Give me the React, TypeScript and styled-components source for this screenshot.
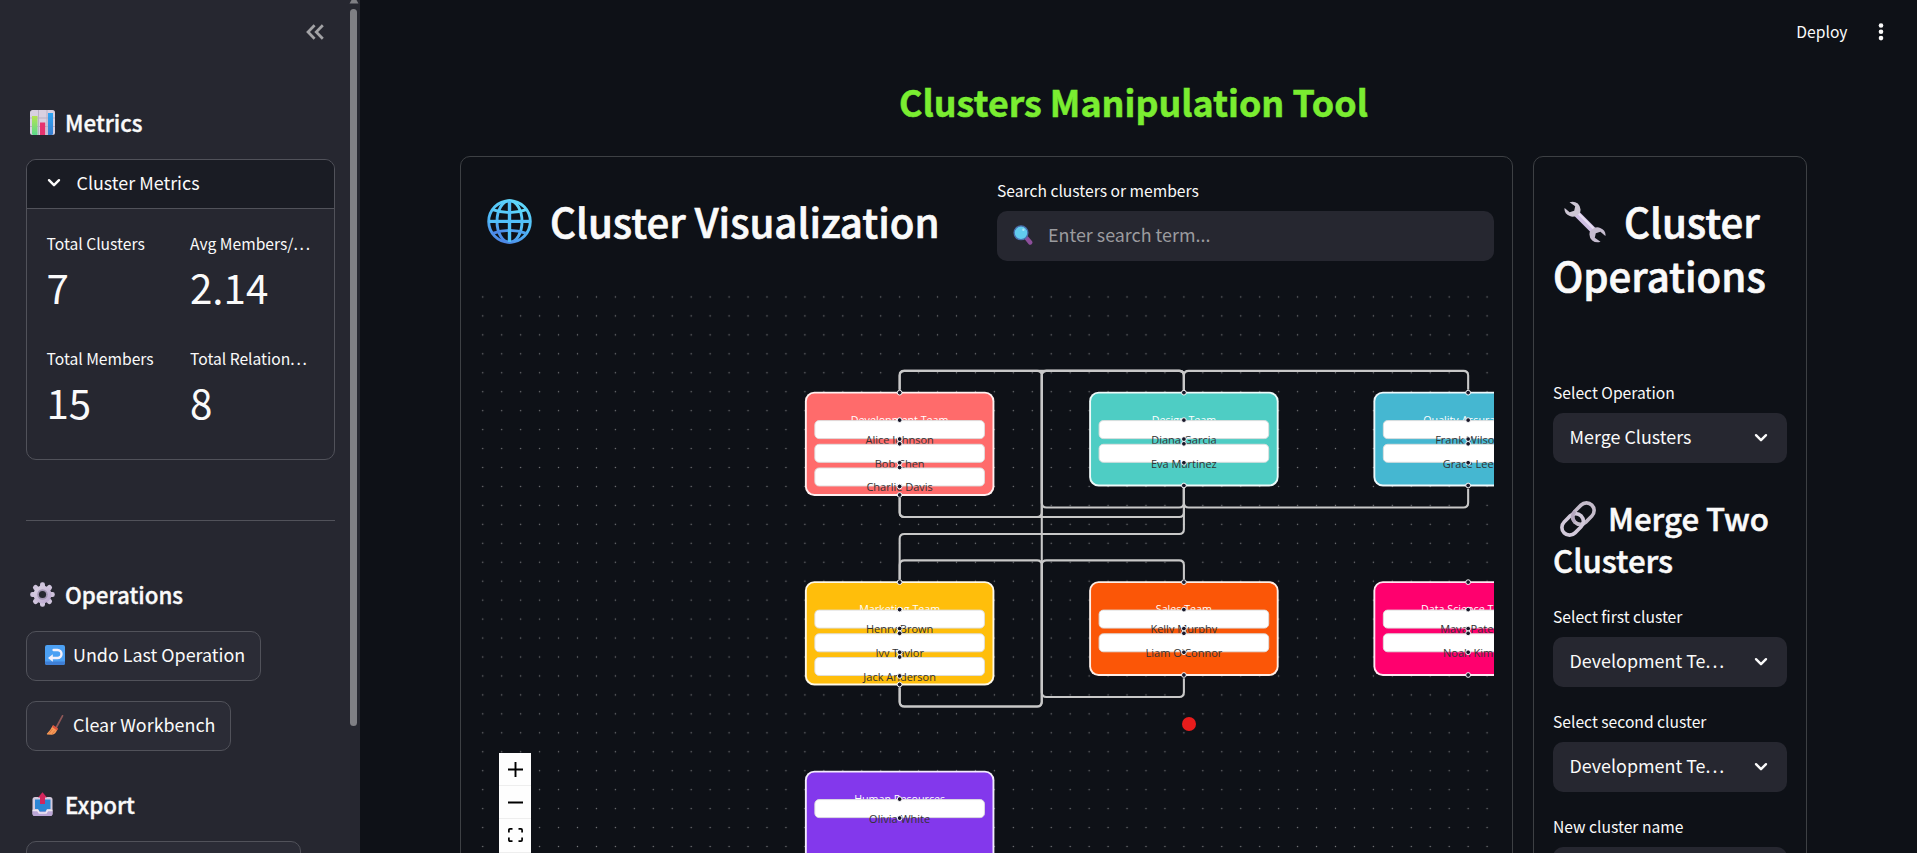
import React from "react";
import styled, { createGlobalStyle } from "styled-components";

const GlobalStyle = createGlobalStyle`
  *, *::before, *::after { box-sizing: border-box; }
  html, body { margin: 0; height: 100%; overflow: hidden; background: #0e1117; }
  body { font-family: "Noto Sans CJK SC", "Noto Sans", sans-serif; color: #fafafa; }
  h1, h2, h3, p { margin: 0; }
  h2, h3 { font-weight: 500; -webkit-text-stroke: 0.017em currentColor; }
  svg { display: block; flex: none; }
`;

const Page = styled.div`
  display: flex;
  width: 100vw;
  height: 100vh;
  overflow: hidden;
`;

/* ---------- sidebar ---------- */

const Sidebar = styled.aside`
  display: flex;
  flex: 0 0 360px;
  height: 100%;
  background: #262730;
  overflow: hidden;
`;

const SidebarBody = styled.div`
  width: 336px;
  flex: none;
  padding: 0 0 0 26px;
`;

const SidebarHeader = styled.div`
  display: flex;
  justify-content: flex-end;
  height: 107px;
  padding: 24px 12px 0 0;
`;

const ScrollTrack = styled.div`
  width: 10px;
  margin-left: 13px;
  display: flex;
  flex-direction: column;
  align-items: center;
  gap: 5px;
`;

const ScrollThumb = styled.div`
  width: 7px;
  height: 717px;
  margin-right: 1px;
  border-radius: 4px;
  background: #7f7f84;
`;

const SideHeading = styled.h2<{ $top?: number }>`
  display: flex;
  align-items: center;
  gap: 10px;
  height: 30px;
  margin-top: ${(p) => p.$top ?? 0}px;
  padding-left: 4px;
  font-size: 22.3px;
  line-height: 30px;
  white-space: nowrap;

  svg { margin-top: 1px; }
`;

const Expander = styled.section`
  width: 309px;
  height: 301px;
  margin-top: 22px;
  border: 1px solid #51525a;
  border-radius: 10px;
  overflow: hidden;
`;

const ExpanderHeader = styled.div`
  display: flex;
  align-items: center;
  gap: 15.5px;
  height: 49px;
  padding: 0 20px 4px 20px;
  border-bottom: 1px solid #51525a;
  background: #1a1c24;
  font-size: 17.9px;
  line-height: 30px;

  svg { margin-top: 2px; }
`;

const MetricGrid = styled.div`
  display: grid;
  grid-template-columns: 123.5px 123px;
  column-gap: 20px;
  row-gap: 32px;
  padding: 23px 19.5px 0;
`;

const MetricLabel = styled.div`
  height: 24px;
  line-height: 24px;
  font-size: 15.65px;
  white-space: nowrap;
`;

const MetricValue = styled.div`
  margin-top: 3px;
  height: 56px;
  line-height: 56px;
  font-size: 40.3px;
`;

const Dots = styled.span`
  letter-spacing: 0.11em;
`;

const Divider = styled.hr`
  width: 309px;
  height: 1px;
  margin: 60px 0 58px;
  border: 0;
  background: #51525a;
`;

const SideButton = styled.button<{ $w: number; $top: number }>`
  display: flex;
  align-items: center;
  gap: 8px;
  width: ${(p) => p.$w}px;
  height: 50px;
  margin-top: ${(p) => p.$top}px;
  padding: 0 0 4px 18px;
  border: 1px solid #51525a;
  border-radius: 10px;
  background: #2b2c36;
  color: #fafafa;
  font-family: inherit;
  font-size: 17.9px;
  white-space: nowrap;

  svg { margin-top: 2px; }
`;

/* ---------- main area ---------- */

const Main = styled.main`
  flex: 1;
  display: flex;
  flex-direction: column;
  min-width: 0;
  padding: 0 0 0 100px;
`;

const TopBar = styled.header`
  display: flex;
  justify-content: flex-end;
  align-items: center;
  gap: 30px;
  height: 77px;
  padding: 0 33.5px 14px 0;
  font-size: 15.65px;
`;

const PageTitle = styled.h1`
  width: 1347px;
  height: 48px;
  line-height: 48px;
  margin-bottom: 31px;
  text-align: center;
  font-size: 35.8px;
  font-weight: 700;
  -webkit-text-stroke: 0.5px currentColor;
  color: #7aed31;
`;

const Columns = styled.div`
  display: flex;
  gap: 20px;
  flex: 1;
  min-height: 0;
`;

const Panel = styled.section<{ $w: number }>`
  width: ${(p) => p.$w}px;
  flex: none;
  height: 800px;
  padding: 0 18px 0 ${(p) => (p.$w > 500 ? 18 : 19)}px;
  border: 1px solid #3d4044;
  border-radius: 10px;
`;

const VizHeader = styled.div`
  display: flex;
  justify-content: space-between;
  height: 125px;
`;

const VizTitle = styled.h2`
  display: flex;
  align-items: center;
  gap: 18px;
  height: 54px;
  margin-top: 37px;
  padding-left: 8px;
  font-size: 40.2px;
  line-height: 54px;
  white-space: nowrap;

  svg { margin-top: 1px; }
`;

const SearchField = styled.div`
  width: 497px;
  margin-top: 22px;
`;

const FieldLabel = styled.label<{ $top?: number }>`
  display: block;
  height: 24px;
  line-height: 24px;
  margin-top: ${(p) => p.$top ?? 0}px;
  font-size: 15.65px;
  white-space: nowrap;
`;

const SearchBox = styled.div`
  display: flex;
  align-items: center;
  gap: 15px;
  height: 50px;
  margin-top: 8px;
  padding: 0 16px 4px;
  border-radius: 10px;
  background: #262730;
  color: #9b9b9f;
  font-size: 17.9px;

  svg { margin-top: 2px; }
`;

const OpsTitle = styled.h2`
  margin-top: 37px;
  height: 108px;
  font-size: 40.2px;
  line-height: 54px;
`;

const OpsSubtitle = styled.h3`
  margin-top: 34px;
  height: 84px;
  font-size: 31.2px;
  line-height: 42px;
`;

const TitleLine = styled.span<{ $gap: number; $pad: number }>`
  display: flex;
  align-items: center;
  gap: ${(p) => p.$gap}px;
  padding-left: ${(p) => p.$pad}px;
  white-space: nowrap;

  svg { margin-top: 1px; }
`;

const Select = styled.div`
  display: flex;
  align-items: center;
  justify-content: space-between;
  width: 234px;
  height: 50px;
  margin-top: 8px;
  padding: 0 19px 4px 16.5px;
  border-radius: 10px;
  background: #262730;
  font-size: 17.9px;

  svg { margin-top: 4px; }
`;

const SelectText = styled.span`
  white-space: nowrap;
`;

/* ---------- flow canvas ---------- */

const ZOOM = 0.9475;
const ORIGIN = { x: 325.9, y: 109.7 };

const Canvas = styled.div`
  position: relative;
  width: 1015px;
  height: 640px;
  overflow: hidden;
  font-family: "Open Sans", "Noto Sans", sans-serif;
`;

const DotGrid = styled.svg`
  position: absolute;
  inset: 0;
`;

const Viewport = styled.div`
  position: absolute;
  left: 0;
  top: 0;
  transform-origin: 0 0;
  transform: translate(${ORIGIN.x}px, ${ORIGIN.y}px) scale(${ZOOM});
`;

const EdgeLayer = styled.svg`
  position: absolute;
  left: 0;
  top: 0;
  overflow: visible;
`;

const ClusterNode = styled.div<{ $x: number; $y: number; $h: number; $c: string }>`
  position: absolute;
  left: ${(p) => p.$x}px;
  top: ${(p) => p.$y}px;
  width: 200px;
  height: ${(p) => p.$h}px;
  border: 2px solid rgba(255, 255, 255, 0.9);
  border-radius: 10px;
  background: ${(p) => p.$c};
`;

const ClusterLabel = styled.div`
  position: absolute;
  left: 0;
  right: 0;
  top: 19px;
  height: 18px;
  line-height: 18px;
  font-size: 11.3px;
  text-align: center;
  color: #fff;
  white-space: nowrap;
`;

const MemberNode = styled.div<{ $x: number; $y: number }>`
  position: absolute;
  left: ${(p) => p.$x}px;
  top: ${(p) => p.$y}px;
  width: 180px;
  height: 20px;
  border: 1px solid #ddd;
  border-radius: 5px;
  background: #fff;
`;

const MemberLabel = styled.div`
  position: absolute;
  left: 0;
  right: 0;
  top: 11px;
  height: 18px;
  line-height: 18px;
  font-size: 11.6px;
  text-align: center;
  color: #333;
  white-space: nowrap;
`;

const Handle = styled.i<{ $at: "top" | "bottom" }>`
  position: absolute;
  left: calc(50% - 3px);
  ${(p) => p.$at}: -4px;
  width: 6px;
  height: 6px;
  border: 1px solid #fff;
  border-radius: 50%;
  background: #1a192b;
`;

const Controls = styled.div`
  position: absolute;
  left: 20px;
  top: 471px;
  width: 32px;
`;

const ControlButton = styled.div`
  display: flex;
  align-items: center;
  justify-content: center;
  height: 33.2px;
  border-bottom: 1px solid #eee;
  background: #fefefe;
`;

const Marker = styled.div`
  position: absolute;
  left: 703px;
  top: 435px;
  width: 14px;
  height: 14px;
  border-radius: 50%;
  background: #e81c1c;
`;

type Cluster = {
  name: string;
  color: string;
  x: number;
  y: number;
  h: number;
  members: string[];
  root?: boolean;
};

const clusters: Cluster[] = [
  { name: "Development Team", color: "#ff6b6b", x: 0, y: 0, h: 110, members: ["Alice Johnson", "Bob Chen", "Charlie Davis"] },
  { name: "Design Team", color: "#4ecdc4", x: 300, y: 0, h: 100, members: ["Diana Garcia", "Eva Martinez"] },
  { name: "Quality Assurance", color: "#45b7d1", x: 600, y: 0, h: 100, members: ["Frank Wilson", "Grace Lee"] },
  { name: "Marketing Team", color: "#ffbe0b", x: 0, y: 200, h: 110, members: ["Henry Brown", "Ivy Taylor", "Jack Anderson"] },
  { name: "Sales Team", color: "#fb5607", x: 300, y: 200, h: 100, members: ["Kelly Murphy", "Liam O'Connor"] },
  { name: "Data Science Team", color: "#ff006e", x: 600, y: 200, h: 100, members: ["Maya Patel", "Noah Kim"] },
  { name: "Human Resources", color: "#8338ec", x: 0, y: 400, h: 100, members: ["Olivia White"], root: true },
];

/* Orthogonal polyline with 5px rounded corners. */
function roundedPath(points: [number, number][], r = 5): string {
  let d = `M${points[0][0]} ${points[0][1]}`;
  for (let i = 1; i < points.length - 1; i++) {
    const [px, py] = points[i - 1];
    const [x, y] = points[i];
    const [nx, ny] = points[i + 1];
    const ax = x - Math.sign(x - px) * r;
    const ay = y - Math.sign(y - py) * r;
    const bx = x + Math.sign(nx - x) * r;
    const by = y + Math.sign(ny - y) * r;
    d += ` L${ax} ${ay} Q${x} ${y} ${bx} ${by}`;
  }
  const last = points[points.length - 1];
  return d + ` L${last[0]} ${last[1]}`;
}

function edge(from: Cluster, to: Cluster): string {
  const sx = from.x + 100;
  const sy = from.y + from.h + 2.3;
  const tx = to.x + 100;
  const ty = to.y - 2;
  if (ty > sy) {
    const my = (sy + ty) / 2;
    return roundedPath([[sx, sy], [sx, my], [tx, my], [tx, ty]]);
  }
  const mx = (sx + tx) / 2;
  return roundedPath([[sx, sy], [sx, sy + 20], [mx, sy + 20], [mx, ty - 20], [tx, ty - 20], [tx, ty]]);
}

const [dev, design, qa, marketing, sales] = clusters;
const links: [Cluster, Cluster][] = [
  [dev, design], [design, dev], [dev, qa], [qa, dev],
  [design, marketing], [marketing, design], [marketing, sales], [sales, marketing],
];

/* ---------- icons ---------- */

const Chevron = () => (
  <svg width="14" height="10" viewBox="0 0 14 10" fill="none" stroke="#fafafa" strokeWidth="2.4" strokeLinecap="round" strokeLinejoin="round">
    <path d="M2 2.2 7 7.2 12 2.2" />
  </svg>
);

const CollapseIcon = () => (
  <svg width="18" height="16" viewBox="0 0 18 16" fill="none" stroke="#a3a3a6" strokeWidth="2.7">
    <path d="M8.6 1.2 2 8l6.600 6.800M16.800 1.200 10.200 8l6.600 6.800" />
  </svg>
);

const ChartIcon = () => (
  <svg width="25" height="25" viewBox="0 0 25 25">
    <defs>
      <linearGradient id="gr" x1="0" y1="0" x2="0" y2="1"><stop offset="0" stopColor="#b5e352" /><stop offset="1" stopColor="#5bd98b" /></linearGradient>
      <linearGradient id="bl" x1="0" y1="0" x2="0" y2="1"><stop offset="0" stopColor="#2ea6f5" /><stop offset="1" stopColor="#3b7fd0" /></linearGradient>
    </defs>
    <rect width="25" height="25" rx="2.500" fill="#d8d0e0" />
    <path d="M8.500 0v25M17 0v25M0 8h25M0 16.500h25" stroke="#b9b0c4" strokeWidth="1" />
    <path d="M2 6h5.500v19H3.500Q2 25 2 23.500Z" fill="url(#gr)" />
    <rect x="10" y="12.500" width="5.200" height="12.500" fill="#e5346f" />
    <path d="M18 3h5v20.500q0 1.500-1.500 1.500H18Z" fill="url(#bl)" />
  </svg>
);

const GearIcon = () => (
  <svg width="25" height="25" viewBox="0 0 25 25">
    <defs><linearGradient id="ge" x1="0" y1="0" x2="1" y2="1"><stop offset="0" stopColor="#ddd6e4" /><stop offset="1" stopColor="#b9a3cf" /></linearGradient></defs>
    <g fill="url(#ge)">
      {[0, 45, 90, 135, 180, 225, 270, 315].map((a) => (
        <rect key={a} x="10" y="0.200" width="5" height="7" rx="2.200" transform={`rotate(${a} 12.500 12.500)`} fill="#cfc4dc" />
      ))}
      <circle cx="12.500" cy="12.500" r="9" />
    </g>
    <circle cx="12.500" cy="12.500" r="5.300" fill="#a396b3" />
    <circle cx="12.500" cy="12.500" r="3.600" fill="#262730" />
  </svg>
);

const UndoIcon = () => (
  <svg width="20" height="20" viewBox="0 0 20 20">
    <rect width="20" height="20" rx="2" fill="#4ca0f3" />
    <path d="M0 16.500h20V18q0 2-2 2H2q-2 0-2-2Z" fill="#3f7fd6" />
    <path d="M8.600 5h3.900a3.700 3.700 0 0 1 0 8H7" fill="none" stroke="#f5f1fb" strokeWidth="2.400" strokeLinecap="round" />
    <path d="M3 13l4.800-3.800v7.600Z" fill="#f5f1fb" />
  </svg>
);

const BroomIcon = () => (
  <svg width="20" height="20" viewBox="0 0 20 20">
    <path d="M17.500.8 11 13" stroke="#8f5757" strokeWidth="1.700" strokeLinecap="round" />
    <path d="M7.800 10.500 12.600 14q-2 5.500-5.600 5.800L2 19.600q-.6-.9.500-1.600 2.700-2.500 5.300-7.500Z" fill="#f79a56" />
    <path d="M8.200 10 13 13.400l-1 2-4.900-3.500Z" fill="#e0533d" />
    <path d="M4 18.500 7.500 14M7 19 10 15.500" stroke="#d9703c" strokeWidth=".8" />
  </svg>
);

const OutboxIcon = () => (
  <svg width="25" height="25" viewBox="0 0 25 25">
    <rect x="2.500" y="5" width="20" height="19" rx="2.500" fill="#d3cadd" />
    <path d="M2.500 19h20v2.500q0 2.500-2.500 2.500H5q-2.500 0-2.500-2.500Z" fill="#bba6d6" />
    <path d="M5 7.500h15.500V17H17l-1.500 2.500h-6L8 17H5Z" fill="#2c85d3" />
    <path d="M2.500 18.500h5.200L9.300 21h6.700l1.600-2.500h4.900" stroke="#ede7f3" strokeWidth="1.600" fill="none" />
    <path d="M12.500.2 17 5.400H15V12h-5V5.400H8Z" fill="#d3265c" />
  </svg>
);

const GlobeIcon = () => (
  <svg width="45" height="45" viewBox="0 0 45 45" fill="none" strokeWidth="2.900">
    <defs><linearGradient id="gl" x1="0.700" y1="0" x2="0.300" y2="1"><stop offset="0" stopColor="#5fd8fb" /><stop offset="0.600" stopColor="#4fb8f8" /><stop offset="1" stopColor="#4c86e6" /></linearGradient></defs>
    <g stroke="url(#gl)">
      <circle cx="22.500" cy="22.500" r="20.800" />
      <ellipse cx="22.500" cy="22.500" rx="12.500" ry="20.800" />
      <path d="M5.500 10.600q17 6 34 0M5.500 34.400q17-6 34 0" />
    </g>
    <g fill="#52c0f9" stroke="none"><rect x="20.800" y="2" width="3.400" height="41" /><rect x="2" y="20.800" width="41" height="3.200" /></g>
  </svg>
);

const SearchIcon = () => (
  <svg width="20" height="20" viewBox="0 0 20 20">
    <path d="M13.800 13.300 17.200 17.500" stroke="#8d4f9b" strokeWidth="4.400" strokeLinecap="round" />
    <circle cx="8" cy="7.800" r="6.900" fill="#62cbee" stroke="#4a6fae" strokeWidth="1.300" />
    <circle cx="10.400" cy="4.800" r="1.200" fill="#a8e6f8" />
  </svg>
);

const WrenchIcon = () => (
  <svg width="42" height="42" viewBox="0 0 42 42">
    <path d="M11 11 31 31" stroke="#cfbfe4" strokeWidth="6.500" />
    <path d="M12.500 10.500 32 30" stroke="#e8dff2" strokeWidth="2" />
    <path d="M5.500 1.200Q10-.4 13.800 2.500q4 4 2.200 9.200-5.500 5.800-10.200 3.400Q-.3 12.500.6 7l5 4.200 4.600-1.400 1-4.600Z" fill="#cdc6d4" />
    <path d="M36.500 40.800q-4.500 1.600-8.300-1.300-4-4-2.200-9.200 5.500-5.800 10.200-3.400 6.100 2.600 5.200 8.100l-5-4.200-4.600 1.400-1 4.600Z" fill="#c5bccf" />
  </svg>
);

const LinkIcon = () => (
  <svg width="36" height="36" viewBox="0 0 36 36" fill="none" strokeWidth="3.600">
    <g transform="rotate(-45 18 18)">
      <rect x="13.600" y="10.300" width="24" height="15.400" rx="7.700" stroke="#c5bccb" />
      <rect x="-1.600" y="10.300" width="24" height="15.400" rx="7.700" stroke="#d2c9da" />
      <path d="M13.600 18a7.700 7.700 0 0 1 7.700-7.700" stroke="#b5a8bf" />
    </g>
  </svg>
);

const DotsMenu = () => (
  <svg width="6" height="18" viewBox="0 0 6 18" fill="#fafafa">
    <circle cx="3" cy="2.500" r="2.300" /><circle cx="3" cy="8.800" r="2.300" /><circle cx="3" cy="15.100" r="2.300" />
  </svg>
);

type Metric = { label: string; clipped?: boolean; value: string };

const metrics: Metric[] = [
  { label: "Total Clusters", value: "7" },
  { label: "Avg Members/", clipped: true, value: "2.14" },
  { label: "Total Members", value: "15" },
  { label: "Total Relation", clipped: true, value: "8" },
];

export default function App() {
  return (
    <Page>
      <GlobalStyle />
      <Sidebar>
        <SidebarBody>
          <SidebarHeader><CollapseIcon /></SidebarHeader>
          <SideHeading><ChartIcon />Metrics</SideHeading>
          <Expander>
            <ExpanderHeader><Chevron />Cluster Metrics</ExpanderHeader>
            <MetricGrid>
              {metrics.map((m) => (
                <div key={m.label}>
                  <MetricLabel>{m.label}{m.clipped && <Dots>...</Dots>}</MetricLabel>
                  <MetricValue>{m.value}</MetricValue>
                </div>
              ))}
            </MetricGrid>
          </Expander>
          <Divider />
          <SideHeading><GearIcon />Operations</SideHeading>
          <SideButton $w={235} $top={22}><UndoIcon />Undo Last Operation</SideButton>
          <SideButton $w={205} $top={20}><BroomIcon />Clear Workbench</SideButton>
          <SideHeading $top={38}><OutboxIcon />Export</SideHeading>
          <SideButton $w={275} $top={22} />
        </SidebarBody>
        <ScrollTrack>
          <svg width="10" height="4" viewBox="0 0 10 4"><path d="M2.500 0h5l2 3.500h-9Z" fill="#7f7f84" /></svg>
          <ScrollThumb />
        </ScrollTrack>
      </Sidebar>

      <Main>
        <TopBar>Deploy<DotsMenu /></TopBar>
        <PageTitle>Clusters Manipulation Tool</PageTitle>
        <Columns>
          <Panel $w={1053}>
            <VizHeader>
              <VizTitle><GlobeIcon />Cluster Visualization</VizTitle>
              <SearchField>
                <FieldLabel>Search clusters or members</FieldLabel>
                <SearchBox><SearchIcon />Enter search term...</SearchBox>
              </SearchField>
            </VizHeader>
            <Canvas>
              <DotGrid width="1015" height="640">
                <defs>
                  <pattern id="dots" width="20" height="20" patternUnits="userSpaceOnUse" patternTransform={`translate(${ORIGIN.x - 9.475} ${ORIGIN.y - 9.475}) scale(${ZOOM})`}>
                    <circle cx="10" cy="10" r="0.750" fill="#77787c" />
                  </pattern>
                </defs>
                <rect y="8" width="1015" height="632" fill="url(#dots)" />
              </DotGrid>
              <Viewport>
                <EdgeLayer width="1" height="1">
                  {links.map(([a, b]) => (
                    <path key={a.name + b.name} d={edge(a, b)} fill="none" stroke="#c8c8c8" strokeWidth="2.200" />
                  ))}
                </EdgeLayer>
                {clusters.map((c) => (
                  <React.Fragment key={c.name}>
                    <ClusterNode $x={c.x} $y={c.y} $h={c.h} $c={c.color}>
                      <ClusterLabel>{c.name}</ClusterLabel>
                      {!c.root && <Handle $at="top" />}
                      <Handle $at="bottom" />
                    </ClusterNode>
                    {c.members.map((m, i) => (
                      <MemberNode key={m} $x={c.x + 10} $y={c.y + 30 + i * 25}>
                        <MemberLabel>{m}</MemberLabel>
                        <Handle $at="top" />
                        <Handle $at="bottom" />
                      </MemberNode>
                    ))}
                  </React.Fragment>
                ))}
              </Viewport>
              <Marker />
              <Controls>
                <ControlButton>
                  <svg width="15" height="15" viewBox="0 0 15 15" stroke="#000" strokeWidth="1.900"><path d="M7.500 0v15M0 7.500h15" /></svg>
                </ControlButton>
                <ControlButton>
                  <svg width="15" height="15" viewBox="0 0 15 15" stroke="#000" strokeWidth="2"><path d="M0 7.500h15" /></svg>
                </ControlButton>
                <ControlButton>
                  <svg width="15" height="14" viewBox="0 0 15 14" fill="none" stroke="#000" strokeWidth="1.700"><path d="M.9 4.500V2Q.9.900 2 .9h2.500M10.500.9H13q1.100 0 1.100 1.100v2.500M14.100 9.500V12q0 1.100-1.100 1.100h-2.500M4.500 13.100H2Q.9 13.100.9 12V9.500" /></svg>
                </ControlButton>
              </Controls>
            </Canvas>
          </Panel>

          <Panel $w={274}>
            <OpsTitle>
              <TitleLine $gap={18} $pad={11}><WrenchIcon />Cluster</TitleLine>
              <TitleLine $gap={0} $pad={0}>Operations</TitleLine>
            </OpsTitle>
            <FieldLabel $top={79}>Select Operation</FieldLabel>
            <Select><SelectText>Merge Clusters</SelectText><Chevron /></Select>
            <OpsSubtitle>
              <TitleLine $gap={12} $pad={7}><LinkIcon />Merge Two</TitleLine>
              <TitleLine $gap={0} $pad={0}>Clusters</TitleLine>
            </OpsSubtitle>
            <FieldLabel $top={24}>Select first cluster</FieldLabel>
            <Select><SelectText>Development Te<Dots>...</Dots></SelectText><Chevron /></Select>
            <FieldLabel $top={23}>Select second cluster</FieldLabel>
            <Select><SelectText>Development Te<Dots>...</Dots></SelectText><Chevron /></Select>
            <FieldLabel $top={23}>New cluster name</FieldLabel>
            <Select />
          </Panel>
        </Columns>
      </Main>
    </Page>
  );
}
